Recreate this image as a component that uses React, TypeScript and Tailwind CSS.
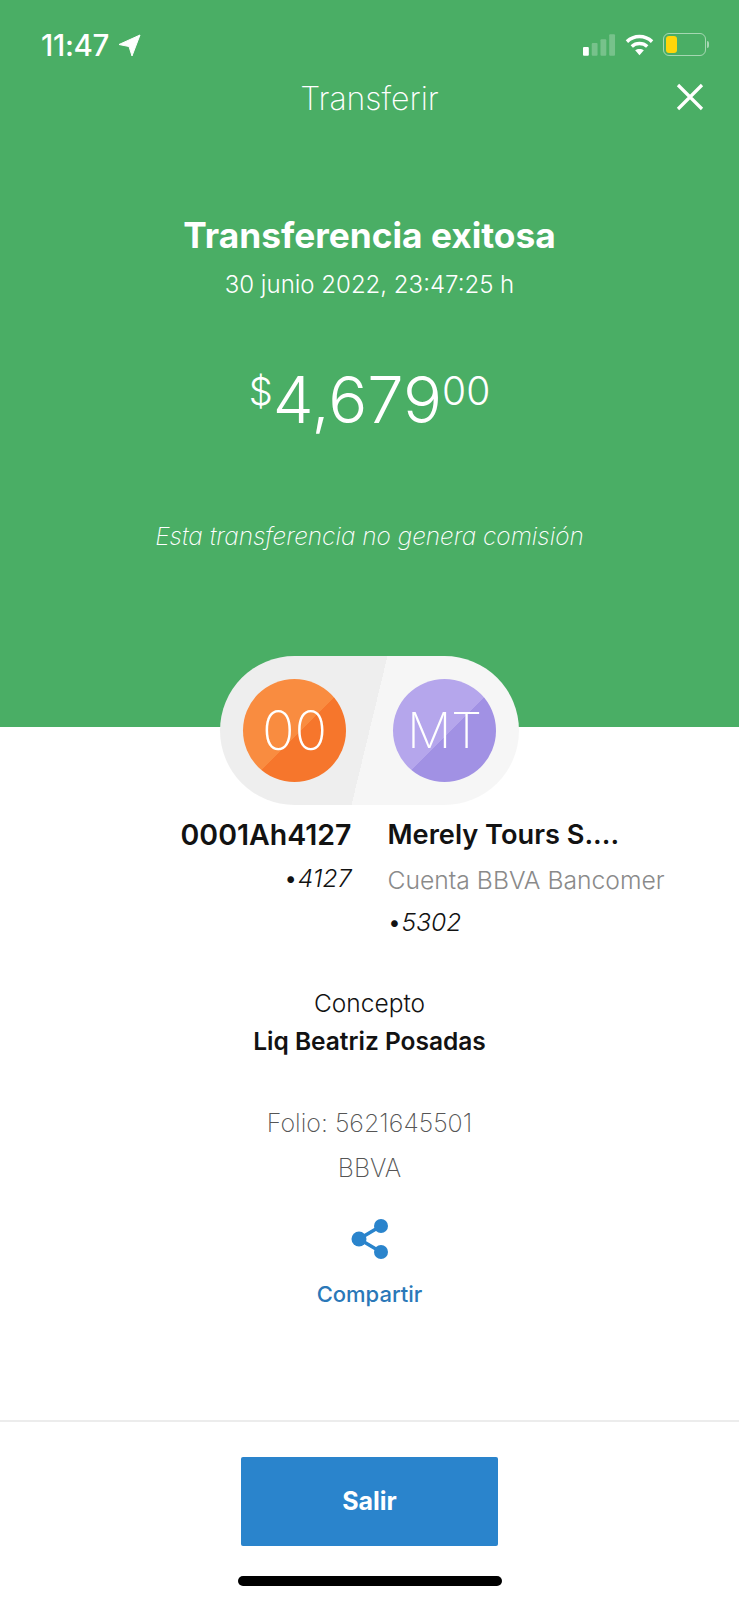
const ink = 'text-[#121212]';

function StatusBar() {
  return (
    <div className="flex h-[74px] items-end justify-between pl-[41px] pr-[30px] pb-[13px]">
      <div className="flex items-center gap-[9px]">
        <span className="text-[29.5px] leading-[32px] font-medium tracking-[-0.3px] text-white">11:47</span>
        <svg width="23" height="23" viewBox="0 0 23 23" fill="#fff" stroke="#fff" strokeWidth="1" strokeLinejoin="round">
          <path d="M22 1 L1 10.5 L11 12.5 L14 22 Z" />
        </svg>
      </div>
      <div className="mb-[5px] flex items-center gap-[9px]">
        <svg width="33" height="22" viewBox="0 0 34 22">
          <rect x="0" y="13" width="6" height="9" rx="1" fill="#fff" />
          <rect x="9" y="9" width="6" height="13" rx="1" fill="#fff" fillOpacity="0.25" />
          <rect x="18" y="5" width="6" height="17" rx="1" fill="#fff" fillOpacity="0.25" />
          <rect x="27" y="0" width="6" height="22" rx="1" fill="#fff" fillOpacity="0.25" />
        </svg>
        <svg width="29" height="22" viewBox="0 0 30 22" fill="none" stroke="#fff" strokeWidth="3.6">
          <path d="M2 7.5 C9.5 0.5 20.5 0.5 28 7.5" />
          <path d="M7 12.5 C11.5 8.5 18.5 8.5 23 12.5" />
          <path d="M15 21.5 L10.5 16.5 C13 14.6 17 14.6 19.5 16.5 Z" fill="#fff" stroke="none" />
        </svg>
        <div className="flex items-center">
          <div className="flex h-[23px] w-[43px] items-center rounded-[6px] border border-white/50 p-[2px]">
            <div className="h-full w-[11px] rounded-[3px] bg-[#ffd60a]" />
          </div>
          <div className="ml-[1px] h-[7px] w-[2px] rounded-r-sm bg-white/50" />
        </div>
      </div>
    </div>
  );
}

function Avatar({ label, tone }: { label: string; tone: string }) {
  return (
    <div className={`flex h-[103px] w-[103px] items-center justify-center rounded-full leading-none font-extralight text-white ${tone}`}>
      {label}
    </div>
  );
}

function Party({ name, nameSize, account, sub, right }: { name: string; nameSize: string; account: string; sub?: string; right?: boolean }) {
  return (
    <div className={right ? 'w-[300px] text-right' : 'w-[300px]'}>
      <div className={`${nameSize} leading-[36px] font-semibold ${ink}`}>{name}</div>
      {sub && <div className="mt-[10px] text-[24.7px] leading-[34px] font-light text-[#8a8a8a]">{sub}</div>}
      <div className={`mt-[8px] text-[24.7px] leading-[34px] font-light italic ${ink}`}>
        <span className="not-italic">•</span>{account}
      </div>
    </div>
  );
}

export default function App() {
  return (
    <div className="flex h-[1600px] w-[739px] flex-col overflow-hidden bg-white font-['Inter',sans-serif]">
      <div className="h-[727px] shrink-0 bg-[#4aae65]">
        <StatusBar />
        <div className="relative mt-[8px] h-[34px] text-center text-[32px] leading-[34px] font-extralight text-white">
          Transferir
          <svg className="absolute top-[1px] right-[35px]" width="28" height="28" viewBox="0 0 28 28" fill="none" stroke="#fff" strokeWidth="3.2">
            <path d="M2 2 L26 26 M26 2 L2 26" />
          </svg>
        </div>
        <div className="mt-[98px] text-center text-[35.3px] leading-[44px] font-bold text-white">Transferencia exitosa</div>
        <div className="mt-[10px] text-center text-[24px] leading-[34px] font-light text-white">30 junio 2022, 23:47:25 h</div>
        <div className="mt-[58px] flex h-[85px] items-start justify-center font-light text-white">
          <span className="mt-[9px] text-[38px] leading-[44px]">$</span>
          <span className="text-[65px] leading-[80px]">4,679</span>
          <span className="mt-[9px] text-[39px] leading-[44px]">00</span>
        </div>
        <div className="mt-[74px] text-center text-[24.4px] leading-[34px] font-extralight italic text-white">Esta transferencia no genera comisión</div>
      </div>

      <div className="mx-auto -mt-[71px] flex h-[149px] w-[299px] shrink-0 items-center justify-between rounded-full bg-[linear-gradient(103.6deg,#eeeeee_50%,#f6f6f6_50%)] px-[23px]">
        <Avatar label="00" tone="text-[54px] bg-[linear-gradient(135deg,#f98c40_53%,#f6762c_53%)]" />
        <Avatar label="MT" tone="text-[49px] bg-[linear-gradient(135deg,#b5a6ec_53%,#a191e4_53%)]" />
      </div>

      <div className="mt-[12px] flex justify-center gap-[36px]">
        <Party name="0001Ah4127" nameSize="text-[28.5px]" account="4127" right />
        <Party name="Merely Tours S...." nameSize="text-[27.2px]" account="5302" sub="Cuenta BBVA Bancomer" />
      </div>

      <div className={`mt-[47px] text-center text-[24.5px] leading-[34px] font-light ${ink}`}>Concepto</div>
      <div className={`mt-[4px] text-center text-[24.5px] leading-[34px] font-semibold ${ink}`}>Liq Beatriz Posadas</div>
      <div className="mt-[48px] text-center text-[25px] leading-[34px] font-extralight text-[#555555]">Folio: 5621645501</div>
      <div className="mt-[11px] text-center text-[25px] leading-[34px] font-extralight text-[#555555]">BBVA</div>

      <div className="mt-[34px] flex justify-center">
        <svg width="37" height="40" viewBox="0 0 37 40" fill="#2a84cc" stroke="#2a84cc">
          <path d="M8 20 L30 7 M8 20 L30 33" strokeWidth="3.5" fill="none" />
          <circle cx="8" cy="20" r="7.5" stroke="none" />
          <circle cx="30" cy="7" r="7" stroke="none" />
          <circle cx="30" cy="33" r="7" stroke="none" />
        </svg>
      </div>
      <div className="mt-[20px] text-center text-[22px] leading-[30px] font-medium text-[#2a78b8]">Compartir</div>

      <div className="mt-[111px] h-[2px] bg-[#ececec]" />
      <button className="mx-auto mt-[35px] block h-[89px] w-[257px] rounded-[2px] bg-[#2a84cc] text-[25px] font-bold text-white">Salir</button>
      <div className="mx-auto mt-[30px] h-[10px] w-[264px] rounded-full bg-black" />
    </div>
  );
}
